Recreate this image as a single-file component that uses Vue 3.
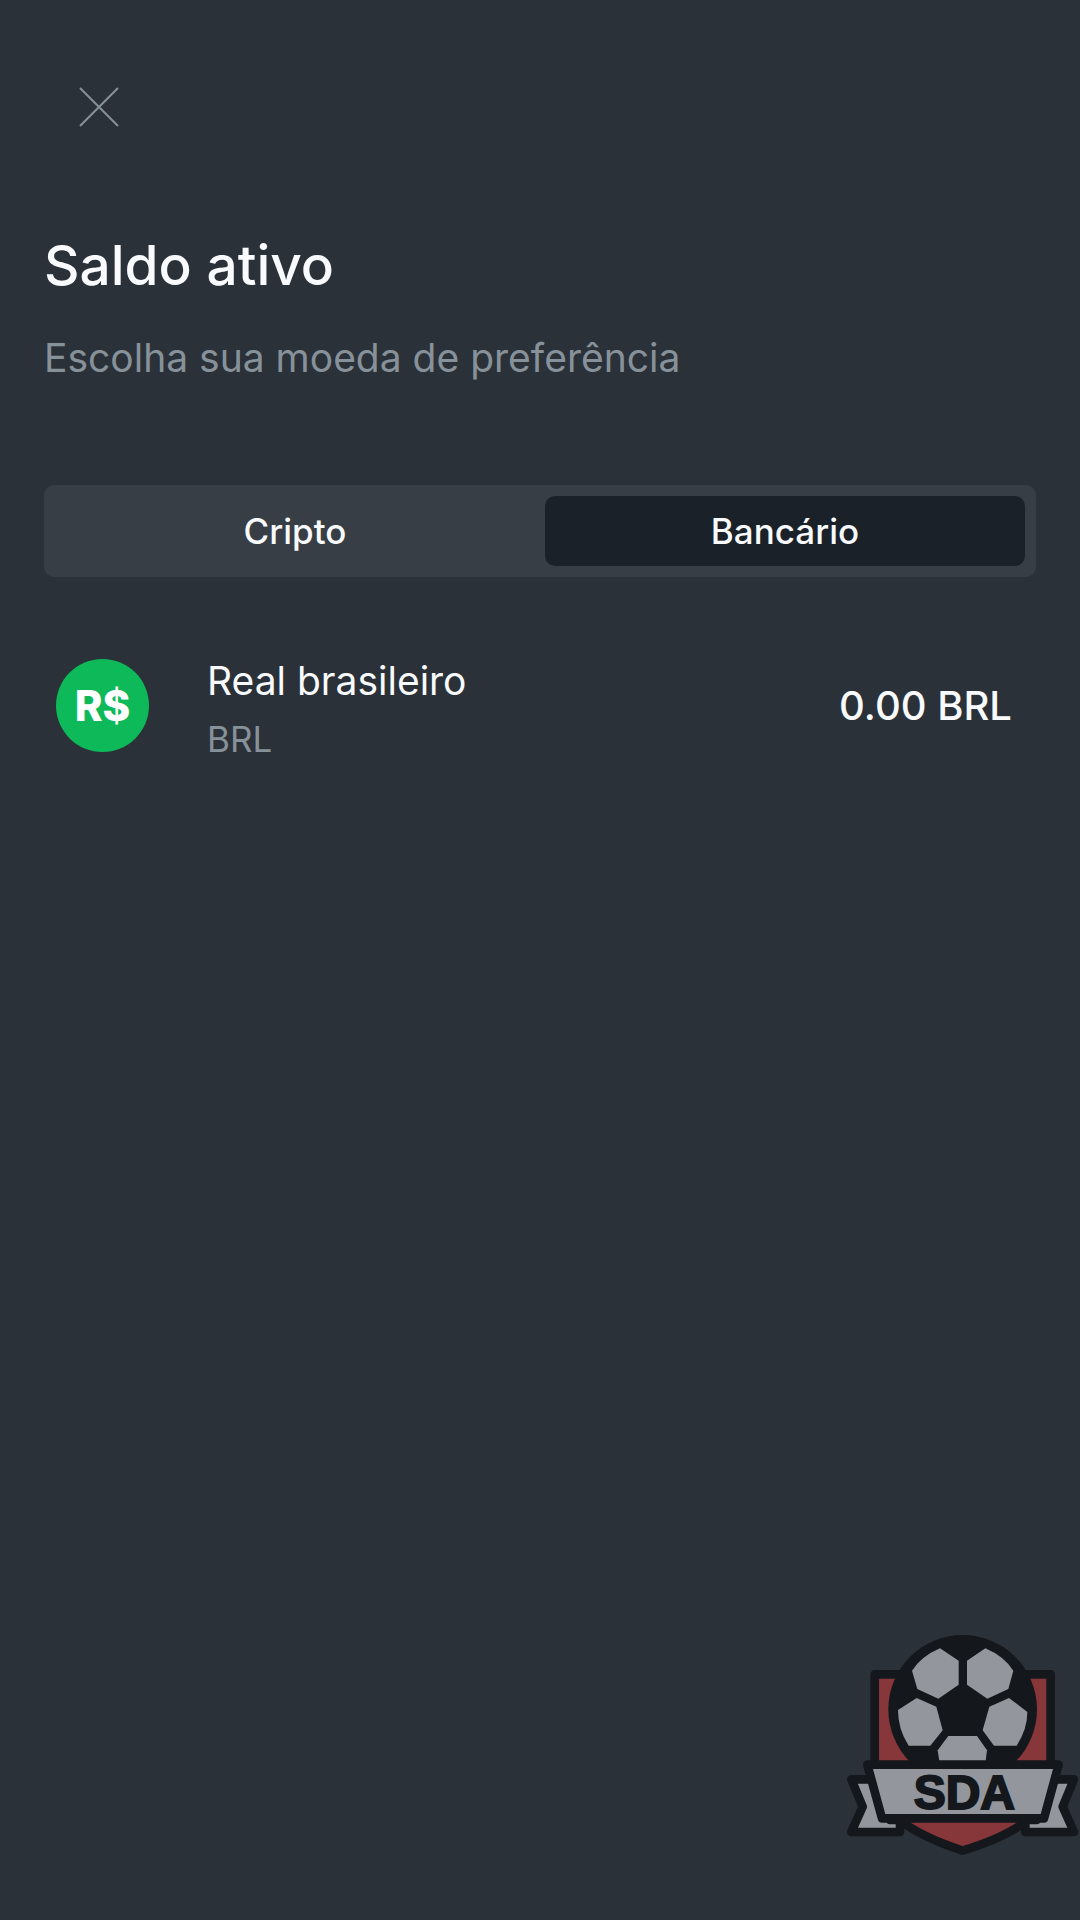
<script setup>
import { ref } from 'vue'

const tabs = [
  { id: 'cripto', label: 'Cripto' },
  { id: 'bancario', label: 'Bancário' },
]
const active = ref('bancario')
const currencies = [
  { code: 'BRL', symbol: 'R$', name: 'Real brasileiro', amount: '0.00 BRL' },
]
</script>

<template>
  <main class="screen">
    <button class="close" type="button" aria-label="Fechar">
      <svg viewBox="0 0 40 40" width="40" height="40" aria-hidden="true">
        <path d="M1 1L39 39M39 1L1 39" fill="none" stroke="#87919a" stroke-width="2" />
      </svg>
    </button>

    <h1 class="title">Saldo ativo</h1>
    <p class="subtitle">Escolha sua moeda de preferência</p>

    <div class="tabs" role="tablist">
      <button
        v-for="tab in tabs"
        :key="tab.id"
        class="tab"
        :class="{ active: active === tab.id }"
        type="button"
        role="tab"
        :aria-selected="active === tab.id"
        @click="active = tab.id"
      >{{ tab.label }}</button>
    </div>

    <ul class="list">
      <li v-for="c in currencies" :key="c.code" class="row">
        <span class="coin">{{ c.symbol }}</span>
        <div class="info">
          <span class="name">{{ c.name }}</span>
          <span class="code">{{ c.code }}</span>
        </div>
        <span class="amount">{{ c.amount }}</span>
      </li>
    </ul>

    <svg class="badge" viewBox="0 0 720 750" role="img" aria-label="SDA">
      <g stroke="#14181d" stroke-width="26" stroke-linejoin="round">
        <!-- shield -->
        <path d="M104 163H632V470C632 570 540 640 368 692C210 640 104 570 104 470Z" fill="#873639" />
        <!-- ribbon tails -->
        <path d="M34 478H110L150 600H180V636H34L68 560Z" fill="#93979d" />
        <path d="M702 478H630L590 600H556V636H702L668 560Z" fill="#93979d" />
      </g>
      <!-- ball -->
      <circle cx="368" cy="268" r="223" fill="#14181d" />
      <g fill="#93979d">
        <path d="M300 85L356 122V194L295 236L232 207L216 152Q245 108 300 85Z" />
        <path d="M436 85L381 122V194L442 236L505 207L520 152Q491 108 436 85Z" />
        <path d="M230 234L289 260L308 331L271 377H206Q174 328 174 270Z" />
        <path d="M507 234L448 260L428 331L462 377H530Q562 328 562 276Z" />
        <path d="M325 348H411L441 391L436 430H299L293 391Z" />
      </g>
      <!-- ribbon -->
      <path d="M82 434H656L612 595H126Z" fill="#93979d" stroke="#14181d" stroke-width="26" stroke-linejoin="round" />
      <text class="badge-text" x="373" y="566" text-anchor="middle">SDA</text>
    </svg>
  </main>
</template>

<style>
body {
  margin: 0;
  background: #2b3138;
}
</style>

<style scoped>
.screen {
  position: relative;
  box-sizing: border-box;
  min-height: 100vh;
  padding: 76px 44px;
  background: #2b3138;
  color: #f8fafd;
  font-family: Inter, "Liberation Sans", sans-serif;
}

.close {
  display: flex;
  margin-left: 24px;
  padding: 11px;
  border: 0;
  background: none;
  cursor: pointer;
}

.title {
  margin: 91px 0 0;
  font-size: 55px;
  font-weight: 500;
  line-height: 72px;
}

.subtitle {
  margin: 33px 0 0;
  color: #87919a;
  font-size: 39px;
  line-height: 48px;
}

.tabs {
  display: flex;
  gap: 10px;
  margin-top: 103px;
  padding: 11px;
  border-radius: 10px;
  background: #383e45;
}

.tab {
  flex: 1;
  height: 70px;
  padding: 0;
  border: 0;
  border-radius: 10px;
  background: none;
  color: #f8fafd;
  font-family: inherit;
  font-size: 35px;
  font-weight: 500;
  cursor: pointer;
}

.tab.active {
  background: #1b2129;
}

.list {
  margin: 72px 0 0;
  padding: 0;
  list-style: none;
}

.row {
  display: flex;
  align-items: center;
  padding: 0 24px 0 12px;
}

.coin {
  display: flex;
  align-items: center;
  justify-content: center;
  width: 93px;
  height: 93px;
  border-radius: 50%;
  background: #0eb959;
  color: #fff;
  font-size: 42px;
  font-weight: 800;
}

.info {
  display: flex;
  flex: 1;
  flex-direction: column;
  gap: 8px;
  margin-left: 58px;
  padding-top: 4px;
}

.name {
  font-size: 39px;
  line-height: 56px;
}

.code {
  color: #87919a;
  font-size: 35px;
  line-height: 44px;
}

.amount {
  font-size: 40px;
  font-weight: 500;
}

.badge {
  position: absolute;
  right: 0;
  bottom: 50px;
  width: 240px;
  height: 250px;
}

.badge-text {
  fill: #14181d;
  stroke: #14181d;
  stroke-width: 6px;
  font-family: "Liberation Sans", Arial, sans-serif;
  font-size: 144px;
  font-weight: 700;
}
</style>
